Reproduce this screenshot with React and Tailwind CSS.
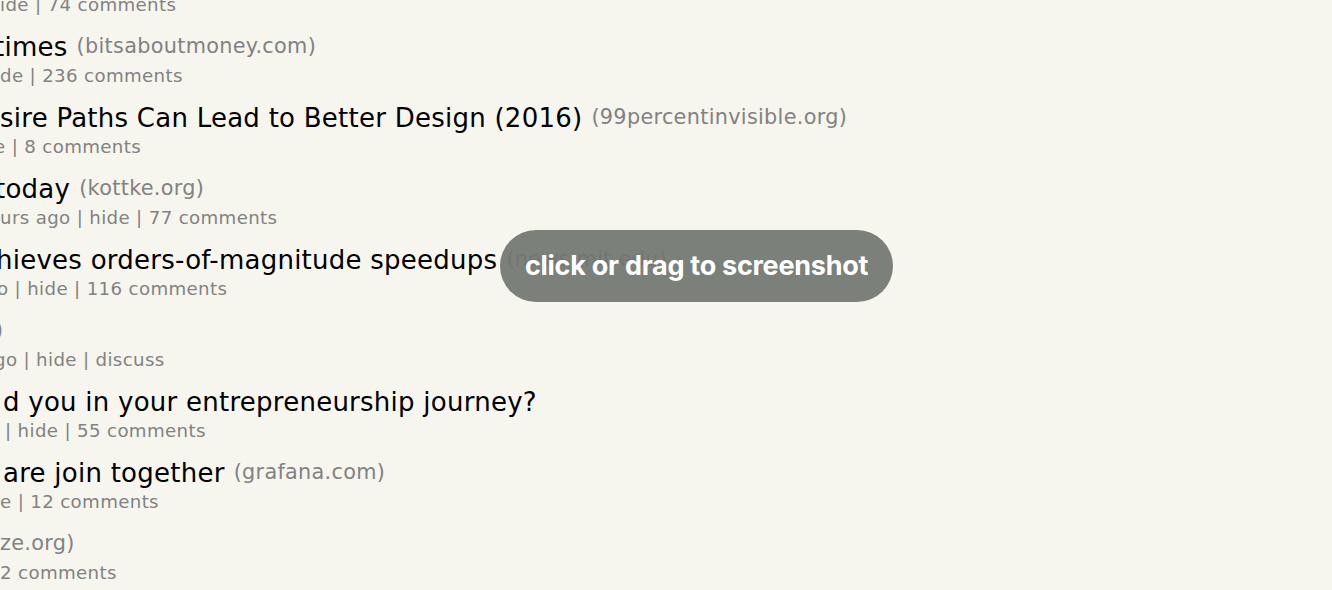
const stories = [
  { title: "", site: "", titleShift: "ml-0", sub: "ide | 74 comments", subShift: "ml-0" },
  { title: "times", site: "(bitsaboutmoney.com)", titleShift: "ml-[-6px]", sub: "de | 236 comments", subShift: "ml-0" },
  {
    title: "sire Paths Can Lead to Better Design (2016)",
    site: "(99percentinvisible.org)",
    titleShift: "ml-0",
    sub: "e | 8 comments",
    subShift: "ml-[-6px]",
  },
  { title: "today", site: "(kottke.org)", titleShift: "ml-[-5px]", sub: "urs ago | hide | 77 comments", subShift: "ml-0" },
  {
    title: "hieves orders-of-magnitude speedups",
    site: "(news.mit.edu)",
    titleShift: "ml-[-4px]",
    sub: "o | hide | 116 comments",
    subShift: "ml-[-3px]",
  },
  { title: "", site: ")", titleShift: "ml-[-5px]", sub: "go | hide | discuss", subShift: "ml-[-6px]" },
  {
    title: "d you in your entrepreneurship journey?",
    site: "",
    titleShift: "ml-[3px]",
    sub: "| hide | 55 comments",
    subShift: "ml-[5px]",
  },
  { title: "are join together", site: "(grafana.com)", titleShift: "ml-[3px]", sub: "e | 12 comments", subShift: "ml-[0px]" },
  { title: "", site: "ze.org)", titleShift: "ml-0", sub: "2 comments", subShift: "ml-0" },
  { title: "", site: "", titleShift: "ml-0", sub: "", subShift: "ml-0" },
];

function Story({ s }) {
  return (
    <div className="flex h-[71px] flex-col">
      <div className={`flex h-[30px] items-center whitespace-nowrap ${s.titleShift}`}>
        {s.title && <span className="text-[26px] tracking-[0.25px] text-black">{s.title}</span>}
        {s.title && s.site && <span className="w-[9px]" />}
        {s.site && <span className="text-[20.8px] tracking-[0.3px] text-[#828282]">{s.site}</span>}
      </div>
      <div
        className={`mt-[1px] flex h-[26px] items-center whitespace-nowrap text-[18.2px] tracking-[0.35px] text-[#828282] ${s.subShift}`}
      >
        {s.sub}
      </div>
    </div>
  );
}

export default function App() {
  return (
    <div className="relative h-[590px] w-[1332px] overflow-hidden bg-[#f6f6ef] font-['DejaVu_Sans',Verdana,sans-serif]">
      <div className="mt-[-39px] flex flex-col">
        {stories.map((s, i) => (
          <Story key={i} s={s} />
        ))}
      </div>

      <div className="absolute left-[500px] top-[230px] flex h-[72px] w-[393px] items-center justify-center rounded-full bg-[rgba(113,117,112,0.92)]">
        <span className="font-['Inter',sans-serif] text-[27px] font-bold tracking-[-0.01em] text-white">
          click or drag to screenshot
        </span>
      </div>
    </div>
  );
}
